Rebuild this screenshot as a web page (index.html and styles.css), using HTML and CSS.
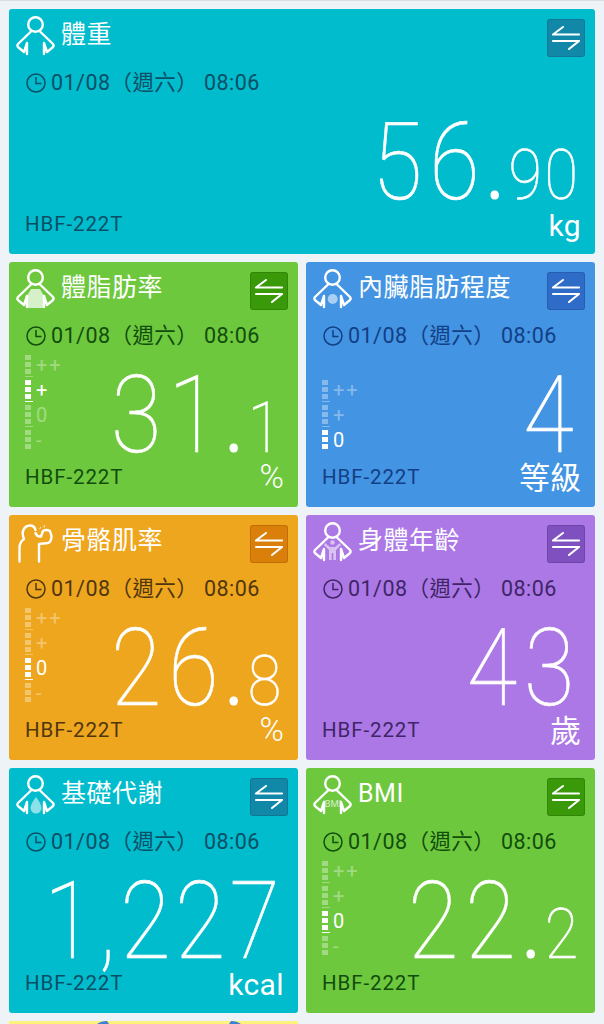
FILE: index.html
```html
<!DOCTYPE html>
<html lang="zh-Hant">
<head>
  <meta charset="UTF-8" />
  <meta name="viewport" content="width=device-width,initial-scale=1" />
  <title>體重</title>
  <link rel="stylesheet" href="styles.css">
</head>
<body>
  <svg class="defs" width="0" height="0">
    <symbol id="person" viewBox="0 0 50 50">
      <circle cx="23.5" cy="12.5" r="7.3" fill="none" stroke="#fff" stroke-width="2.4"/>
      <path d="M19 19.5 L6 32 Q4.5 34 6.5 35.5 L12 40 L15 31 V42 M28 19.5 L41 32 Q42.5 34 40.5 35.5 L35 40 L32 31 V42" fill="none" stroke="#fff" stroke-width="2.4" stroke-linecap="round" stroke-linejoin="round"/>
    </symbol>
    <symbol id="swap" viewBox="0 0 36 36">
      <path d="M5 14.5 H31 M5 14.5 L15 7 M31 21 H5 M31 21 L21 29" fill="none" stroke="#fff" stroke-width="2.1" stroke-linecap="round"/>
    </symbol>
    <symbol id="clock" viewBox="0 0 20 20">
      <circle cx="10" cy="10" r="9" fill="none" stroke="currentColor" stroke-width="1.5"/>
      <path d="M10 4 V10.5 H15.5" fill="none" stroke="currentColor" stroke-width="1.5"/>
    </symbol>
  </svg>

  <main class="grid">
    <section class="card wide teal">
      <header class="head">
        <svg class="icon"><use href="#person"/></svg>
        <h2>體重</h2>
        <span class="swap"><svg><use href="#swap"/></svg></span>
      </header>
      <p class="time"><svg><use href="#clock"/></svg>01/08（週六） 08:06</p>
      <div class="main">
        <p class="value">56<small><span class="dot">.</span>90</small></p>
      </div>
      <footer class="foot"><span class="model">HBF-222T</span><span class="unit">kg</span></footer>
    </section>

    <section class="card green">
      <header class="head">
        <svg class="icon" viewBox="0 0 50 50"><path d="M15 31 L19 24 H28 L32 31 V43 H15 Z" fill="#fff" opacity=".72"/><use href="#person" width="50" height="50"/></svg>
        <h2>體脂肪率</h2>
        <span class="swap"><svg><use href="#swap"/></svg></span>
      </header>
      <p class="time"><svg><use href="#clock"/></svg>01/08（週六） 08:06</p>
      <div class="main">
        <div class="meter">
          <div class="level"><i></i><i></i><i></i><b>++</b></div>
          <div class="level on"><i></i><i></i><i></i><b>+</b></div>
          <div class="level"><i></i><i></i><i></i><b>0</b></div>
          <div class="level"><i></i><i></i><i></i><b>-</b></div>
        </div>
        <p class="value">31<small><span class="dot">.</span>1</small></p>
      </div>
      <footer class="foot"><span class="model">HBF-222T</span><span class="unit pct">%</span></footer>
    </section>

    <section class="card blue">
      <header class="head">
        <svg class="icon" viewBox="0 0 50 50"><circle cx="23.7" cy="34" r="5" fill="#fff" opacity=".55"/><use href="#person" width="50" height="50"/></svg>
        <h2>內臟脂肪程度</h2>
        <span class="swap"><svg><use href="#swap"/></svg></span>
      </header>
      <p class="time"><svg><use href="#clock"/></svg>01/08（週六） 08:06</p>
      <div class="main">
        <div class="meter">
          <div class="level"><i></i><i></i><i></i><b>++</b></div>
          <div class="level"><i></i><i></i><i></i><b>+</b></div>
          <div class="level on"><i></i><i></i><i></i><b>0</b></div>
        </div>
        <p class="value">4</p>
      </div>
      <footer class="foot"><span class="model">HBF-222T</span><span class="unit cjk">等級</span></footer>
    </section>

    <section class="card orange">
      <header class="head">
        <svg class="icon" viewBox="0 0 50 50">
          <path d="M7.5 43.5 V30 Q7.5 24 12 21 Q10 16 11 13 Q13 7.5 18 7.5 Q22.5 7.5 23.5 12 M23.5 15 Q25 19 29 18.5 L31 13 Q34 11 38 13 L39.5 18 Q39.5 24 36 25 L27 26 V43.5" fill="none" stroke="#fff" stroke-width="2.4" stroke-linecap="round" stroke-linejoin="round"/>
          <path d="M27.5 11 L29 9 M32 9.5 L32.5 7" fill="none" stroke="#fff" stroke-width="1.2" opacity=".7"/>
        </svg>
        <h2>骨骼肌率</h2>
        <span class="swap"><svg><use href="#swap"/></svg></span>
      </header>
      <p class="time"><svg><use href="#clock"/></svg>01/08（週六） 08:06</p>
      <div class="main">
        <div class="meter">
          <div class="level"><i></i><i></i><i></i><b>++</b></div>
          <div class="level"><i></i><i></i><i></i><b>+</b></div>
          <div class="level on"><i></i><i></i><i></i><b>0</b></div>
          <div class="level"><i></i><i></i><i></i><b>-</b></div>
        </div>
        <p class="value">26<small><span class="dot">.</span>8</small></p>
      </div>
      <footer class="foot"><span class="model">HBF-222T</span><span class="unit pct">%</span></footer>
    </section>

    <section class="card purple">
      <header class="head">
        <svg class="icon" viewBox="0 0 50 50">
          <circle cx="23.5" cy="24.5" r="2.3" fill="#fff" opacity=".55"/>
          <path d="M16 25 L21 29 H26 L31 25 L32 27 L27 32 V42 H24.3 V35 H22.7 V42 H20 V32 L15 27 Z" fill="#fff" opacity=".55"/>
          <use href="#person" width="50" height="50"/>
        </svg>
        <h2>身體年齡</h2>
        <span class="swap"><svg><use href="#swap"/></svg></span>
      </header>
      <p class="time"><svg><use href="#clock"/></svg>01/08（週六） 08:06</p>
      <div class="main">
        <p class="value">43</p>
      </div>
      <footer class="foot"><span class="model">HBF-222T</span><span class="unit cjk">歲</span></footer>
    </section>

    <section class="card teal">
      <header class="head">
        <svg class="icon" viewBox="0 0 50 50"><path d="M24 26 Q29.5 33 29.5 37 A5.5 5.5 0 0 1 18.5 37 Q18.5 33 24 26 Z" fill="#fff" opacity=".55"/><use href="#person" width="50" height="50"/></svg>
        <h2>基礎代謝</h2>
        <span class="swap"><svg><use href="#swap"/></svg></span>
      </header>
      <p class="time"><svg><use href="#clock"/></svg>01/08（週六） 08:06</p>
      <div class="main">
        <p class="value long">1,227</p>
      </div>
      <footer class="foot"><span class="model">HBF-222T</span><span class="unit">kcal</span></footer>
    </section>

    <section class="card green">
      <header class="head">
        <svg class="icon" viewBox="0 0 50 50"><use href="#person" width="50" height="50"/><text class="bmi" x="24" y="36" text-anchor="middle">BMI</text></svg>
        <h2>BMI</h2>
        <span class="swap"><svg><use href="#swap"/></svg></span>
      </header>
      <p class="time"><svg><use href="#clock"/></svg>01/08（週六） 08:06</p>
      <div class="main">
        <div class="meter">
          <div class="level"><i></i><i></i><i></i><b>++</b></div>
          <div class="level"><i></i><i></i><i></i><b>+</b></div>
          <div class="level on"><i></i><i></i><i></i><b>0</b></div>
          <div class="level"><i></i><i></i><i></i><b>-</b></div>
        </div>
        <p class="value">22<small><span class="dot">.</span>2</small></p>
      </div>
      <footer class="foot"><span class="model">HBF-222T</span></footer>
    </section>

    <section class="next">
      <svg viewBox="0 0 289 3"><path d="M88 3 Q92 0 98 0 L100 3 Z M222 0 Q228 0 232 3 H220 Z" fill="#3f7fd6"/></svg>
    </section>
  </main>
</body>
</html>
```

FILE: styles.css
```css
*{box-sizing:border-box}
html,body{margin:0;height:1024px;overflow:hidden}
body{background:#eef3f7;border-top:1px solid #d9dfe4;font-family:Roboto,"Noto Sans CJK TC",sans-serif;color:#fff}
.defs{position:absolute}
p,h2{margin:0;font-weight:400}

.grid{display:grid;grid-template-columns:289px 289px;grid-template-rows:repeat(4,244.5px) 2.6px;gap:8.6px 8px;padding:8px 9px 0;height:1023px;overflow:hidden}
.card{display:flex;flex-direction:column;border-radius:3px;padding:3px 10px 8px 3px;overflow:hidden}
.wide{grid-column:1 / 3}

.head{display:flex;align-items:flex-start;height:45px}
.icon{width:50px;height:50px;margin-right:-1px;flex:none}
.head h2{flex:1;font-size:25px;line-height:46px;font-weight:400;letter-spacing:.5px;white-space:nowrap}
.swap{width:38px;height:38px;margin-top:7px;border-radius:3px;border:1px solid rgba(0,0,0,.12);background:var(--btn);flex:none}
.swap svg{display:block;width:36px;height:36px}

.time{display:flex;align-items:center;height:24px;margin:14px 0 0 14px;font-size:21.5px;line-height:24px;color:var(--ink);white-space:pre;letter-spacing:.45px}
.time svg{width:20px;height:20px;margin:0 5px 0 0}

.main{flex:1;display:flex;align-items:flex-end;justify-content:flex-end;margin-left:13px;min-height:0}
.meter{display:flex;flex-direction:column;gap:5px;margin:0 auto 9px 0}
.level{position:relative;display:flex;flex-direction:column;gap:1.7px;width:6px;height:20px;opacity:.35}
.level i{display:block;height:5.4px;background:#fff}
.level b{position:absolute;left:11px;top:-3px;font-size:20px;line-height:26px;font-weight:400;letter-spacing:2px;white-space:nowrap}
.level::after{content:"";position:absolute;left:0;top:21.5px;width:8px;height:1px;background:#fff}
.level:last-child::after{display:none}
.level.on{opacity:1}

.value{flex:none;margin:0 4px 5px 0;font-family:Roboto,sans-serif;font-weight:100;font-size:107px;line-height:76px;height:76px;letter-spacing:8px;white-space:nowrap;-webkit-text-stroke:.6px #fff;transform:scaleX(.86);transform-origin:right bottom}
.value.long{letter-spacing:5px}
.value small{font-size:71px;letter-spacing:3px}
.value .dot{font-weight:500;-webkit-text-stroke:0;letter-spacing:6px}

.foot{display:flex;align-items:center;justify-content:space-between;height:40px;margin:0 4px 0 13px}
.model{font-size:20.5px;padding-bottom:4px;color:var(--ink);letter-spacing:.9px}
.unit{font-size:30px;line-height:40px;font-weight:400;letter-spacing:.4px}
.unit.cjk{font-size:31px;letter-spacing:0}
.unit.pct{font-size:33px;font-weight:300;letter-spacing:0;padding-bottom:4px}
.bmi{font-family:Roboto,sans-serif;font-size:9.5px;fill:#fff;opacity:.7}

.teal{background:#00bccd;--btn:#1288a8;--ink:#0b4f66}
.green{background:#6ec83e;--btn:#3a9908;--ink:#114d0c}
.blue{background:#4394e3;--btn:#2e6cc8;--ink:#123f85}
.orange{background:#eea61e;--btn:#d97f0a;--ink:#50360e}
.purple{background:#ab78e6;--btn:#7f50bf;--ink:#3f2566}
.next{background:#fff27a;overflow:hidden}
.next svg{display:block;width:289px;height:3px}
```
